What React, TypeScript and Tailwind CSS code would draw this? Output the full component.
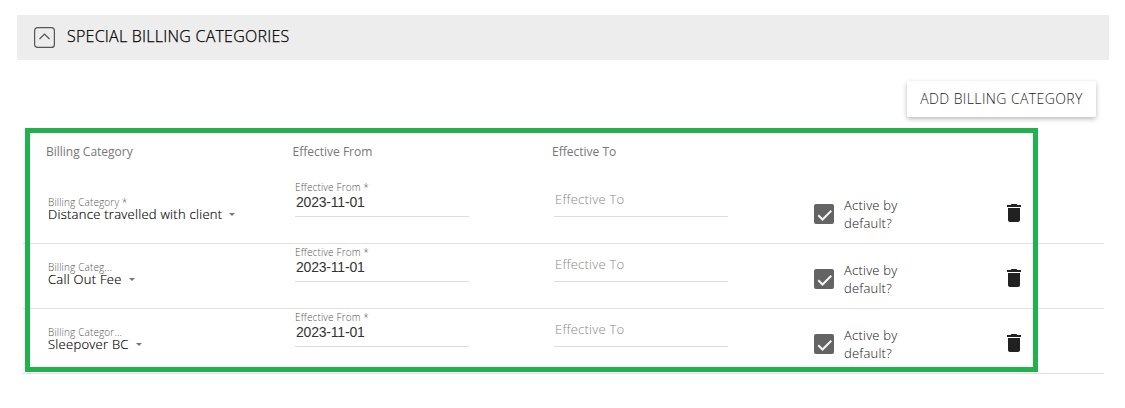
interface BillingCategory {
  label: string;
  name: string;
  from: string;
}

const categories: BillingCategory[] = [
  { label: "Billing Category *", name: "Distance travelled with client", from: "2023-11-01" },
  { label: "Billing Categ...", name: "Call Out Fee", from: "2023-11-01" },
  { label: "Billing Categor...", name: "Sleepover BC", from: "2023-11-01" },
];

const columns = "grid grid-cols-[273px_259px_260px_193px_1fr]";

function CollapseIcon() {
  return (
    <svg className="h-[21px] w-[21px]" viewBox="0 0 21 21" fill="none" stroke="#555">
      <rect x="0.6" y="0.6" width="19.8" height="19.8" rx="3" strokeWidth="1.2" />
      <path d="M5.5 12 10.5 7l5 5" strokeWidth="1.2" />
    </svg>
  );
}

function Checkbox() {
  return (
    <div className="mt-[25px] flex size-5 items-center justify-center rounded-xs bg-[#646464]">
      <svg className="size-5" viewBox="0 0 20 20" fill="none" stroke="#f5f5f5" strokeWidth="2">
        <path d="m4.3 11.3 4.2 4.2L17.3 6.8" />
      </svg>
    </div>
  );
}

function TrashIcon() {
  return (
    <svg className="mt-[25px] h-[18px] w-3.5" viewBox="5 3 14 18" fill="#212121">
      <path d="M6 19c0 1.1.9 2 2 2h8c1.1 0 2-.9 2-2V7H6v12zM19 4h-3.5l-1-1h-5l-1 1H5v2h14V4z" />
    </svg>
  );
}

function CategoryRow({ category }: { category: BillingCategory }) {
  return (
    <div className={`${columns} h-[65px] border-b border-[#e1e1e1]`}>
      <div className="pt-[17px] pl-[26px]">
        <div className="text-[10px] leading-3 tracking-[0.14px] whitespace-nowrap text-[#555]">{category.label}</div>
        <div className="flex items-center whitespace-nowrap">
          <span className="text-[13px] leading-3 tracking-[0.27px] text-black [-webkit-text-stroke:0.15px]">
            {category.name}
          </span>
          <span className="ml-[7px] border-x-[3.5px] border-t-[3.5px] border-x-transparent border-t-[#757575]" />
        </div>
      </div>

      <div className="h-[38px] w-[174px] border-b border-[#dcdcdc]">
        <div className="pt-0.5 text-[10px] leading-3 tracking-[0.14px] text-[#555]">Effective From *</div>
        <div className="pt-px pl-px font-['Liberation_Sans'] text-sm leading-4 font-normal tracking-[-0.2px] text-[#333]">
          {category.from}
        </div>
      </div>

      <div className="h-[38px] w-[174px] border-b border-[#dcdcdc] pt-[11px] pl-px text-[13px] leading-[18px] tracking-[0.24px] text-[#888]">
        Effective To
      </div>

      <div className="flex gap-2.5">
        <Checkbox />
        <div className="w-20 pt-[17px] text-[13px] leading-[18px] tracking-[0.22px] text-[#111]">
          Active by
          <br />
          default?
        </div>
      </div>

      <TrashIcon />
    </div>
  );
}

export default function App() {
  return (
    <div className="relative h-[408px] w-[1125px] bg-white pt-[15px] font-['Open_Sans',sans-serif] font-light">
      {/* Section header */}
      <div className="mr-4 ml-[17px] flex h-[45px] items-center bg-[#ededed] pl-[17px]">
        <CollapseIcon />
        <h2 className="ml-3 pb-[3px] text-base leading-6 tracking-[0.24px] text-black [-webkit-text-stroke:0.25px]">
          SPECIAL BILLING CATEGORIES
        </h2>
      </div>

      <div className="mt-[21px] mr-[29px] flex justify-end">
        <button className="h-9 w-[189px] rounded-xs bg-white text-sm tracking-[0.4px] text-[#222] shadow-[0_2px_5px_rgba(0,0,0,0.28)]">
          ADD BILLING CATEGORY
        </button>
      </div>

      {/* Categories */}
      <div className="mr-[21px] ml-[22px] pt-[26px]">
        <div className="grid h-9 grid-cols-[270.5px_259.5px_1fr] text-xs leading-[18px] font-normal text-[#777]">
          <div className="pl-6">Billing Category</div>
          <div>Effective From</div>
          <div>Effective To</div>
        </div>
        {categories.map((category) => (
          <CategoryRow key={category.name} category={category} />
        ))}
      </div>

      {/* Highlight frame */}
      <div className="pointer-events-none absolute top-[128px] left-[25px] h-[244px] w-[1013px] border-5 border-[#22b14c]" />
    </div>
  );
}
